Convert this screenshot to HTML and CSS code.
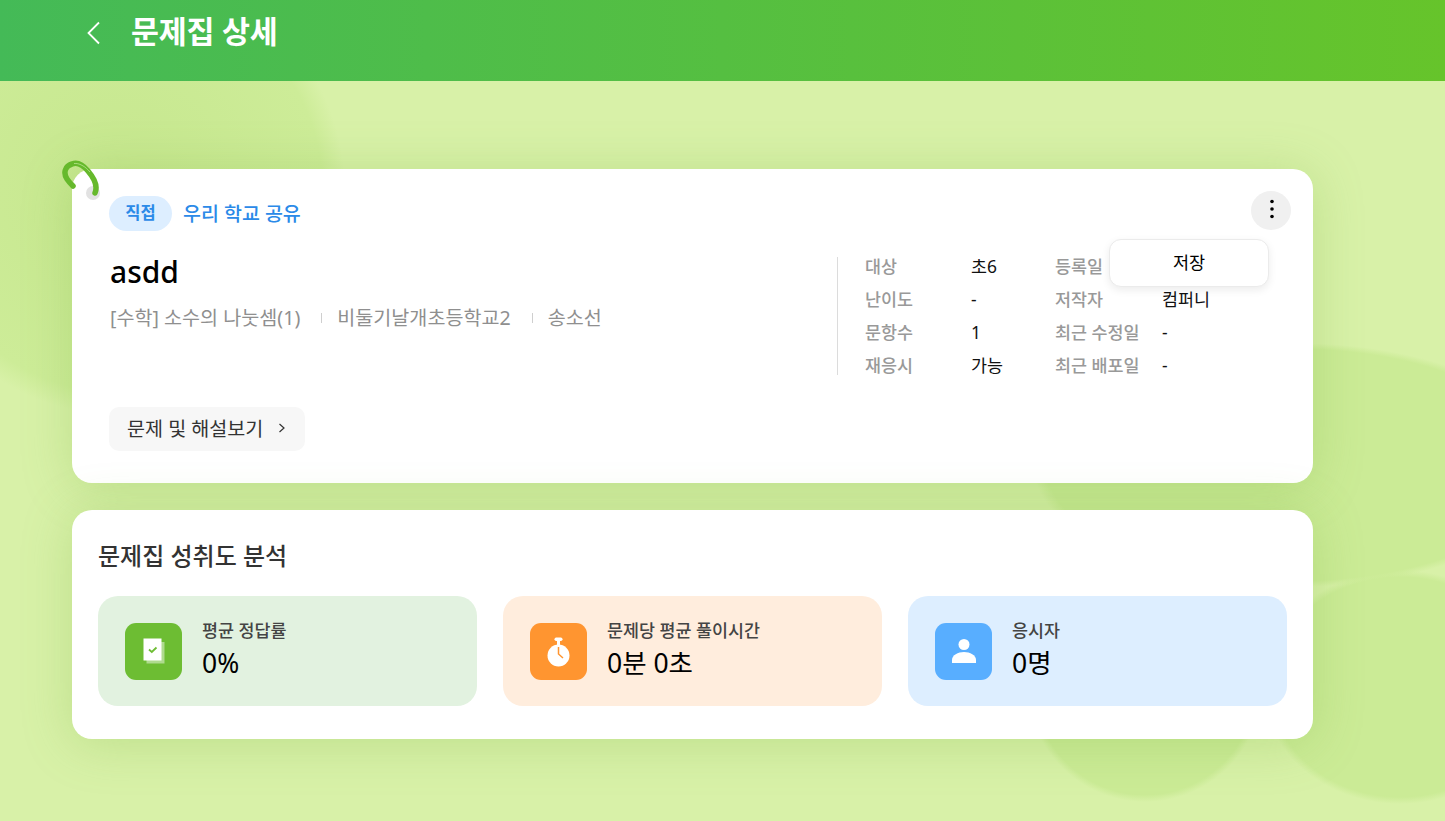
FILE: index.html
```html
<!DOCTYPE html>
<html lang="ko">
<head>
    <meta charset="UTF-8">
    <title>문제집 상세</title>
    <link rel="stylesheet" href="styles.css">
</head>
<body>
    <header class="top-bar">
        <svg class="back-icon" width="16" height="24" viewBox="0 0 16 24"><path d="M13 1.500 L2.500 12 L13 22.500" fill="none" stroke="#fff" stroke-width="1.800"/></svg>
        <h1>문제집 상세</h1>
    </header>

    <main class="content">
        <section class="card info-card">
            <svg class="ring" width="44" height="44" viewBox="0 0 44 44">
                <circle cx="32" cy="34" r="7" fill="#e2e2e2"/>
                <path d="M34 34 C37 27 33 19 27 12 C22 6 16 3 11 5 C4 7 2 14 6 20 C8 23 10 25 12 27" fill="none" stroke="#66b92c" stroke-width="5.500" stroke-linecap="round"/>
                <path d="M29 13 C24 7 18 4 13 4.500" fill="none" stroke="#a8dc7c" stroke-width="1"/>
            </svg>

            <div class="tag-row">
                <span class="tag">직접</span>
                <span class="share">우리 학교 공유</span>
            </div>
            <button class="more-btn"><svg width="4" height="20" viewBox="0 0 4 20"><circle cx="2" cy="2.500" r="1.800"/><circle cx="2" cy="10" r="1.800"/><circle cx="2" cy="17.500" r="1.800"/></svg></button>
            <div class="menu">저장</div>

            <div class="info-body">
                <div class="info-main">
                    <h2>asdd</h2>
                    <p class="meta">
                        <span>[수학] 소수의 나눗셈(1)</span>
                        <i class="sep"></i>
                        <span>비둘기날개초등학교2</span>
                        <i class="sep"></i>
                        <span>송소선</span>
                    </p>
                </div>
                <dl class="details">
                    <dt>대상</dt><dd>초6</dd><dt>등록일</dt><dd></dd>
                    <dt>난이도</dt><dd>-</dd><dt>저작자</dt><dd>컴퍼니</dd>
                    <dt>문항수</dt><dd>1</dd><dt>최근 수정일</dt><dd>-</dd>
                    <dt>재응시</dt><dd>가능</dd><dt>최근 배포일</dt><dd>-</dd>
                </dl>
            </div>

            <button class="view-btn">문제 및 해설보기
                <svg width="8" height="12" viewBox="0 0 8 12"><path d="M1.500 2 L6 6 L1.500 10" fill="none" stroke="#333" stroke-width="1.200"/></svg>
            </button>
        </section>

        <section class="card stats-card">
            <h3>문제집 성취도 분석</h3>
            <div class="stats">
                <div class="stat stat-green">
                    <div class="stat-icon">
                        <svg width="26" height="28" viewBox="0 0 26 28">
                            <rect x="5.500" y="5" width="18" height="21.500" fill="#fff" opacity=".45"/>
                            <rect x="2.500" y="1.500" width="18" height="22" fill="#fff"/>
                            <path d="M8 12.500 L10.800 15 L15.500 10.500" fill="none" stroke="#6dbd33" stroke-width="1.800"/>
                        </svg>
                    </div>
                    <div>
                        <div class="stat-label">평균 정답률</div>
                        <div class="stat-value">0%</div>
                    </div>
                </div>
                <div class="stat stat-orange">
                    <div class="stat-icon">
                        <svg width="28" height="32" viewBox="0 0 28 32">
                            <rect x="9.500" y="2.500" width="8" height="3.500" rx="1.700" fill="#fff"/>
                            <rect x="12" y="5" width="3" height="5" fill="#fff"/>
                            <circle cx="13.500" cy="20.500" r="11" fill="#fff"/>
                            <path d="M13.500 12 V19 L18 23" fill="none" stroke="#ff9530" stroke-width="1.500"/>
                        </svg>
                    </div>
                    <div>
                        <div class="stat-label">문제당 평균 풀이시간</div>
                        <div class="stat-value">0분 0초</div>
                    </div>
                </div>
                <div class="stat stat-blue">
                    <div class="stat-icon">
                        <svg width="26" height="26" viewBox="0 0 26 26">
                            <circle cx="13" cy="6.500" r="5.500" fill="#fff"/>
                            <path d="M1 25 V22 C1 17 7 14 13 14 C19 14 25 17 25 22 V25 Z" fill="#fff"/>
                        </svg>
                    </div>
                    <div>
                        <div class="stat-label">응시자</div>
                        <div class="stat-value">0명</div>
                    </div>
                </div>
            </div>
        </section>
    </main>
</body>
</html>
```

FILE: styles.css
```css
* {
    box-sizing: border-box;
}
body {
    margin: 0;
    height: 821px;
    overflow: hidden;
    background-color: #d8f1a8;
    background-image:
        radial-gradient(circle 225px at 120px 190px, #c6e78e 0%, #cdec98 90%, rgba(216, 241, 168, 0) 100%),
        radial-gradient(ellipse 262px 122px at 1295px 465px, #cbeb96 95%, rgba(203, 235, 150, 0) 100%),
        radial-gradient(circle 118px at 1145px 684px, #cbeb96 94%, rgba(203, 235, 150, 0) 100%),
        radial-gradient(ellipse 137px 117px at 1400px 687px, #cbeb96 94%, rgba(203, 235, 150, 0) 100%);
    font-family: "Noto Sans", "Noto Sans CJK KR", sans-serif;
    color: #000;
}
.top-bar {
    display: flex;
    align-items: center;
    height: 81px;
    padding: 0 0 16px 86px;
    background: linear-gradient(90deg, #44ba57 0%, #66c42b 100%);
}
.top-bar h1 {
    margin: -2px 0 0 29px;
    font-size: 30.400px;
    font-weight: 700;
    line-height: 36px;
    color: #fff;
    letter-spacing: -0.2px;
}
.content {
    display: flex;
    flex-direction: column;
    gap: 27px;
    width: 1241px;
    margin: 88px 0 0 72px;
}
.card {
    position: relative;
    background-color: #fff;
    border-radius: 20px;
    box-shadow: 0 4px 50px rgba(120, 175, 60, 0.28);
}
.info-card {
    height: 314px;
    padding: 27px 37px 0;
}
.ring {
    position: absolute;
    left: -11px;
    top: -10px;
}
.tag-row {
    display: flex;
    align-items: center;
    gap: 11px;
    height: 35px;
}
.tag {
    width: 63px;
    height: 35px;
    border-radius: 18px;
    background-color: #ddeeff;
    color: #2b8ae8;
    font-size: 16.500px;
    font-weight: 700;
    line-height: 33px;
    text-align: center;
}
.share {
    margin-top: -3px;
    color: #2b8ae8;
    font-size: 19.500px;
    font-weight: 500;
}
.more-btn {
    position: absolute;
    right: 22px;
    top: 22px;
    width: 40px;
    height: 39px;
    padding: 0 0 0 2px;
    border: none;
    border-radius: 50%;
    background-color: #f0f0f0;
}
.menu {
    position: absolute;
    left: 1037px;
    top: 70px;
    z-index: 2;
    width: 160px;
    height: 48px;
    border: 1px solid #ebebeb;
    border-radius: 12px;
    background-color: #fff;
    box-shadow: 0 3px 8px rgba(0, 0, 0, 0.08);
    font-size: 17.500px;
    line-height: 44px;
    text-align: center;
}
.info-body {
    display: flex;
    justify-content: space-between;
    margin-top: 26px;
    height: 118px;
}
.info-main {
    padding-left: 1px;
}
.info-main h2 {
    margin: -3px 0 0;
    font-size: 30px;
    font-weight: 500;
    line-height: 36px;
}
.meta {
    display: flex;
    align-items: center;
    margin: 15px 0 0;
    color: #8f8f8f;
    font-size: 19.600px;
    line-height: 26px;
}
.sep {
    width: 1px;
    height: 10px;
    margin: 0 15px 0 21px;
    background-color: #cfcfcf;
}
.details {
    display: grid;
    grid-template-columns: 106px 84px 107px 1fr;
    grid-auto-rows: 33px;
    align-content: start;
    width: 439px;
    height: 118px;
    margin: 0;
    padding-left: 27px;
    border-left: 1px solid #dcdcdc;
    font-size: 17.400px;
    line-height: 18px;
}
.details dt {
    color: #999;
    font-weight: 500;
}
.details dd {
    margin: 0;
    color: #111;
}
.view-btn {
    display: flex;
    align-items: center;
    gap: 15px;
    height: 44px;
    margin-top: 32px;
    padding: 0 19px 3px 18px;
    border: none;
    border-radius: 10px;
    background-color: #f7f7f7;
    color: #333;
    font-family: inherit;
    font-size: 19.600px;
}
.stats-card {
    height: 229px;
    padding: 28px 26px 0;
}
.stats-card h3 {
    margin: 0;
    font-size: 24px;
    font-weight: 500;
    line-height: 36px;
    color: #333;
}
.stats {
    display: grid;
    grid-template-columns: repeat(3, 1fr);
    gap: 26px;
    margin-top: 22px;
}
.stat {
    display: flex;
    align-items: center;
    gap: 20px;
    height: 110px;
    padding-left: 27px;
    border-radius: 20px;
}
.stat-icon {
    display: flex;
    align-items: center;
    justify-content: center;
    width: 57px;
    height: 57px;
    border-radius: 11px;
}
.stat-green {
    background-color: #e2f2e0;
}
.stat-green .stat-icon {
    background-color: #6dbd33;
}
.stat-orange {
    background-color: #ffeddd;
}
.stat-orange .stat-icon {
    background-color: #ff9530;
}
.stat-blue {
    background-color: #ddeeff;
}
.stat-blue .stat-icon {
    background-color: #58aeff;
}
.stat-label {
    margin: -2px 0 4px;
    color: #444;
    font-size: 17.400px;
    font-weight: 500;
    line-height: 22px;
}
.stat-value {
    font-size: 26.500px;
    line-height: 36px;
}
```
